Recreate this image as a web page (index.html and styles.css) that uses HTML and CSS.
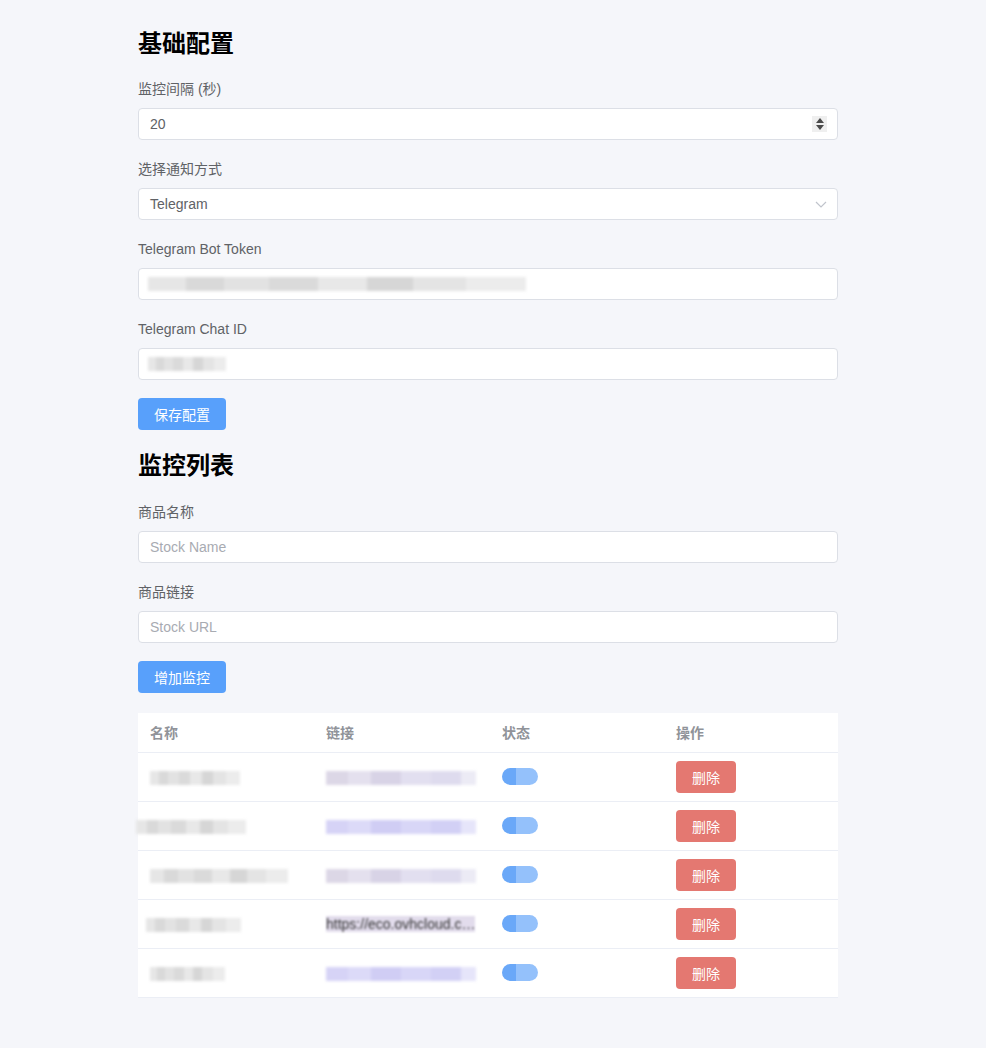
FILE: index.html
```html
<!DOCTYPE html>
<html lang="zh-CN">
<head>
<meta charset="utf-8">
<title>监控配置</title>
<link rel="stylesheet" href="styles.css">
</head>
<body>
<main class="page">
  <h2 class="title">基础配置</h2>
  <div class="field">
    <label class="label">监控间隔 (秒)</label>
    <div class="box">
      <span class="value">20</span>
      <span class="spin">
        <svg width="10" height="14" viewBox="0 0 10 14"><path d="M5 1 L9 6 H1 Z" fill="#4a4a4a"/><path d="M1 8 H9 L5 13 Z" fill="#4a4a4a"/></svg>
      </span>
    </div>
  </div>
  <div class="field">
    <label class="label">选择通知方式</label>
    <div class="box">
      <span class="value">Telegram</span>
      <svg class="chev" width="12" height="7" viewBox="0 0 12 7"><path d="M1 1 L6 6 L11 1" fill="none" stroke="#c0c4cc" stroke-width="1.2"/></svg>
    </div>
  </div>
  <div class="field">
    <label class="label">Telegram Bot Token</label>
    <div class="box"><span class="mosaic token"></span></div>
  </div>
  <div class="field last">
    <label class="label">Telegram Chat ID</label>
    <div class="box"><span class="mosaic chat"></span></div>
  </div>
  <button class="btn primary">保存配置</button>

  <h2 class="title second">监控列表</h2>
  <div class="field">
    <label class="label">商品名称</label>
    <div class="box"><span class="placeholder">Stock Name</span></div>
  </div>
  <div class="field last">
    <label class="label">商品链接</label>
    <div class="box"><span class="placeholder">Stock URL</span></div>
  </div>
  <button class="btn primary">增加监控</button>

  <table class="table">
    <colgroup>
      <col class="c1"><col class="c2"><col class="c3"><col class="c4">
    </colgroup>
    <thead>
      <tr><th>名称</th><th>链接</th><th>状态</th><th>操作</th></tr>
    </thead>
    <tbody>
      <tr>
        <td><span class="mosaic n1"></span></td>
        <td><span class="mosaic l1"></span></td>
        <td><span class="switch"></span></td>
        <td><button class="btn danger">删除</button></td>
      </tr>
      <tr>
        <td><span class="mosaic n2"></span></td>
        <td><span class="mosaic l2"></span></td>
        <td><span class="switch"></span></td>
        <td><button class="btn danger">删除</button></td>
      </tr>
      <tr>
        <td><span class="mosaic n3"></span></td>
        <td><span class="mosaic l1"></span></td>
        <td><span class="switch"></span></td>
        <td><button class="btn danger">删除</button></td>
      </tr>
      <tr>
        <td><span class="mosaic n4"></span></td>
        <td><a class="link" href="#">https://eco.ovhcloud.c…</a></td>
        <td><span class="switch"></span></td>
        <td><button class="btn danger">删除</button></td>
      </tr>
      <tr>
        <td><span class="mosaic n5"></span></td>
        <td><span class="mosaic l2"></span></td>
        <td><span class="switch"></span></td>
        <td><button class="btn danger">删除</button></td>
      </tr>
    </tbody>
  </table>
</main>
</body>
</html>
```
FILE: styles.css
```css
* { box-sizing: border-box; }
html, body { margin: 0; padding: 0; }
body {
  background: #f5f6fa;
  font-family: "Liberation Sans", Arial, "Noto Sans CJK SC", sans-serif;
  color: #606266;
  font-size: 14px;
}
.page {
  width: 710px;
  margin: 0 auto;
  padding: 28px 10px 50px 0;
}
.title {
  margin: 0 0 19px;
  font-size: 24px;
  line-height: 32px;
  font-weight: 700;
  color: #000;
}
.title.second { margin-top: 20px; margin-bottom: 20px; }
.field { margin-bottom: 19px; }
.field.last { margin-bottom: 18px; }
.label {
  display: block;
  line-height: 20px;
  margin-bottom: 9px;
  color: #606266;
}
.box {
  height: 32px;
  background: #fff;
  border: 1px solid #dcdfe6;
  border-radius: 4px;
  display: flex;
  align-items: center;
  padding: 0 10px 0 11px;
  font-size: 14px;
  color: #606266;
}
.value { flex: 1; }
.placeholder { color: #a8abb2; }
.spin {
  width: 15px;
  height: 16px;
  background: #efefef;
  display: flex;
  align-items: center;
  justify-content: center;
}
.chev { margin-right: 0; }
.btn {
  font-family: inherit;
  border: 0;
  border-radius: 4px;
  color: #fff;
  font-size: 14px;
  cursor: pointer;
}
.btn.primary {
  background: #58a0fb;
  width: 88px;
  height: 32px;
  display: block;
}
.btn.danger {
  background: #e47871;
  width: 60px;
  height: 32px;
}
.mosaic {
  display: inline-block;
  height: 14px;
  vertical-align: middle;
  filter: blur(1.5px);
  background: linear-gradient(90deg, #e6e6e6 0 10%, #d9d9d9 10% 20%, #e2e2e2 20% 32%, #dadada 32% 45%, #e8e8e8 45% 58%, #d6d6d6 58% 70%, #e4e4e4 70% 84%, #ececec 84% 100%);
}
.token { width: 378px; margin-left: -2px; }
.chat { width: 78px; margin-left: -2px; }
.table {
  margin-top: 20px;
  width: 700px;
  border-collapse: collapse;
  background: #fff;
  table-layout: fixed;
}
.c1, .c2 { width: 176px; }
.c3, .c4 { width: 174px; }
.table th, .table td {
  text-align: left;
  padding: 0 12px;
  border-bottom: 1px solid #ebeef5;
}
.table th {
  height: 39px;
  color: #909399;
  font-weight: 700;
}
.table td { height: 49px; }
.n1 { width: 90px; }
.n2 { width: 110px; margin-left: -14px; }
.n3 { width: 138px; }
.n4 { width: 95px; margin-left: -4px; }
.n5 { width: 75px; }
.l1, .l2 {
  width: 150px;
  background: linear-gradient(90deg, #dcd7e6 0 15%, #e4e0ee 15% 30%, #d8d3e6 30% 50%, #e2dff0 50% 70%, #dedbee 70% 90%, #ecebf5 90% 100%);
}
.l2 {
  background: linear-gradient(90deg, #d6d3f6 0 15%, #dcdaf8 15% 30%, #d0cdf4 30% 50%, #d8d6f7 50% 70%, #d2d0f5 70% 90%, #e6e5fa 90% 100%);
}
.link {
  display: inline-block;
  color: #333;
  text-decoration: none;
  white-space: nowrap;
  background: #e2dcec;
  filter: blur(0.8px);
}
.switch {
  display: inline-block;
  width: 36px;
  height: 17px;
  border-radius: 9px;
  background: linear-gradient(90deg, #6aa8f8 0 40%, #94c1fb 40% 100%);
  vertical-align: middle;
  filter: blur(0.6px);
}
```
